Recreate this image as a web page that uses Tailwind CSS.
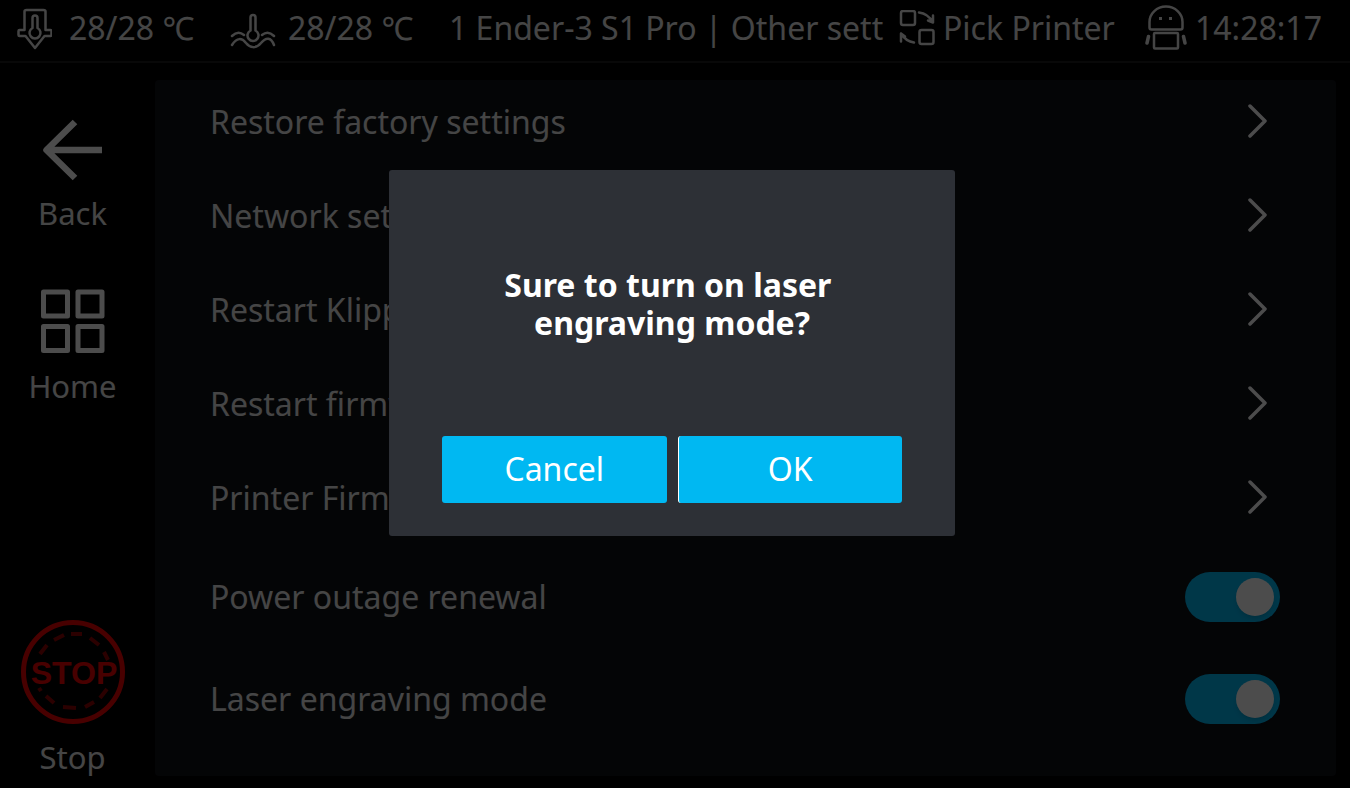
<!DOCTYPE html>
<html lang="en">
<head>
    <meta charset="UTF-8">
    <meta name="viewport" content="width=device-width, initial-scale=1.0">
    <title>Other settings</title>
    <script src="https://cdn.jsdelivr.net/npm/@tailwindcss/browser@4"></script>
</head>
<body class="min-h-screen flex flex-col bg-black text-[#e6e6e6] text-[32px] leading-[38px] font-['Noto_Sans',sans-serif]">
    <!-- Status bar -->
    <header class="h-[63px] pb-[5px] flex items-center border-b-2 border-[#1c1c1c] whitespace-nowrap">
        <div class="w-[214px] ml-4 flex shrink-0 items-center gap-[17px]">
            <svg class="w-9 h-11 shrink-0" viewBox="-1 -2 36 44" fill="none" stroke="currentColor" stroke-width="2.500" stroke-linejoin="round">
                <path d="M7.500 3.500Q7.500 2 9.500 2h17q2 0 2 1.500V22h5q1 0 1 1v4q0 1-1 1h-6L18 40 8.500 28h-6q-1 0-1-1v-4q0-1 1-1h5z"/>
                <path d="M15.500 20V10a2.500 2.500 0 0 1 5 0v10a5.500 5.500 0 1 1-5 0z"/>
            </svg>
            <span>28/28 ℃</span>
        </div>
        <div class="w-[219px] flex shrink-0 items-center gap-3">
            <svg class="w-[46px] h-11 shrink-0" viewBox="0 -2 46 44" fill="none" stroke="currentColor" stroke-width="2.500" stroke-linecap="round">
                <path d="M20.500 22.500V9.500a2.500 2.500 0 0 1 5 0v13a5.500 5.500 0 1 1-5 0z"/>
                <path d="M2 28q6-6 12-1M32 27q6-5 12 1"/>
                <path d="M2 37C7 29 12 30 16 35s10 6 15 0 10-6 13 2"/>
            </svg>
            <span>28/28 ℃</span>
        </div>
        <h1 class="flex-1">1 Ender-3 S1 Pro | Other sett</h1>
        <button class="w-[245px] flex shrink-0 items-center gap-2">
            <svg class="w-9 h-9 shrink-0" viewBox="0 1 36 36" fill="none" stroke="currentColor" stroke-width="2.500" stroke-linecap="round" stroke-linejoin="round">
                <rect x="2" y="2" width="14" height="14" rx="2"/>
                <rect x="20.500" y="21" width="14" height="14" rx="2"/>
                <path d="M20 3.500q9 1 14 10V6.500M34 13.500l-5-2M15 33.500q-8-1-13-9M2 32.500v-8l4 3"/>
            </svg>
            <span>Pick Printer</span>
        </button>
        <div class="w-[206px] flex shrink-0 items-center gap-2">
            <svg class="w-[43px] h-[46px] shrink-0" viewBox="0 1 43 46" fill="none" stroke="currentColor" stroke-width="2.500" stroke-linejoin="round">
                <path d="M7.500 25.500q-2 0-2-2V18a16.500 15.500 0 0 1 33 0v5.500q0 2-2 2z"/>
                <rect x="10" y="29" width="24" height="15.500" rx="1"/>
                <path d="M15 14.500h3M25 14.500h3" stroke-width="3"/>
                <path d="M4.500 32.500l-1.500 6.500M39.500 32.500l1.500 6.500" stroke-width="3.500" stroke-linecap="round"/>
            </svg>
            <time>14:28:17</time>
        </div>
    </header>

    <div class="flex-1 flex">
        <!-- Navigation -->
        <nav class="w-[155px] pr-[10px] pt-[53px] pb-3 shrink-0 flex flex-col items-center text-[31px]">
            <button class="flex flex-col items-center">
                <svg class="w-[68px] h-[68px]" viewBox="0 0 68 68" fill="none" stroke="#fff" stroke-width="6.500" stroke-linejoin="round">
                    <path d="M64 34H8M37 6L8.500 34 37 62"/>
                </svg>
                <span class="mt-[10px]">Back</span>
            </button>
            <button class="mt-[55px] flex flex-col items-center">
                <svg class="w-[68px] h-[68px]" viewBox="0 0 68 68" fill="none" stroke="#fff" stroke-width="5" stroke-linejoin="round">
                    <rect x="5.500" y="5" width="24" height="24"/>
                    <rect x="40" y="5" width="24" height="24"/>
                    <rect x="5.500" y="39.500" width="24" height="24"/>
                    <rect x="40" y="39.500" width="24" height="24"/>
                </svg>
                <span class="mt-3">Home</span>
            </button>
            <button class="mt-auto flex flex-col items-center">
                <svg class="w-[106px] h-[106px]" viewBox="0 0 106 106" fill="none" stroke="#f00000">
                    <circle cx="53" cy="53" r="49.500" stroke-width="5"/>
                    <path stroke="#900000" stroke-width="4" d="M20 35l7-9M34 21l10-5M51 15h11M70 19l9 7M84 33l4 8M19 69l2 3M26 77l8 7M43 88l13 1M65 88l9-5M80 79l7-9"/>
                    <text x="54" y="65" text-anchor="middle" fill="#f00000" stroke="none" font-family="Liberation Sans, sans-serif" font-weight="700" font-size="32">STOP</text>
                </svg>
                <span class="mt-[13px]">Stop</span>
            </button>
        </nav>

        <!-- Settings list -->
        <main class="flex-1 mt-[17px] mr-[14px] mb-3 pt-[10px] pl-[55px] pr-14 flex flex-col gap-[30px] rounded-sm bg-[#0f1117]">
            <button class="h-16 flex items-center justify-between">
                <span>Restore factory settings</span>
                <svg class="w-9 h-9 mr-1" viewBox="0 0 36 36" fill="none" stroke="#fff" stroke-width="3.500" stroke-linecap="round" stroke-linejoin="round"><path d="M10 2l15 15-15 15"/></svg>
            </button>
            <button class="h-16 flex items-center justify-between">
                <span>Network settings</span>
                <svg class="w-9 h-9 mr-1" viewBox="0 0 36 36" fill="none" stroke="#fff" stroke-width="3.500" stroke-linecap="round" stroke-linejoin="round"><path d="M10 2l15 15-15 15"/></svg>
            </button>
            <button class="h-16 flex items-center justify-between">
                <span>Restart Klipper</span>
                <svg class="w-9 h-9 mr-1" viewBox="0 0 36 36" fill="none" stroke="#fff" stroke-width="3.500" stroke-linecap="round" stroke-linejoin="round"><path d="M10 2l15 15-15 15"/></svg>
            </button>
            <button class="h-16 flex items-center justify-between">
                <span>Restart firmware</span>
                <svg class="w-9 h-9 mr-1" viewBox="0 0 36 36" fill="none" stroke="#fff" stroke-width="3.500" stroke-linecap="round" stroke-linejoin="round"><path d="M10 2l15 15-15 15"/></svg>
            </button>
            <button class="h-16 flex items-center justify-between">
                <span>Printer Firmware</span>
                <svg class="w-9 h-9 mr-1" viewBox="0 0 36 36" fill="none" stroke="#fff" stroke-width="3.500" stroke-linecap="round" stroke-linejoin="round"><path d="M10 2l15 15-15 15"/></svg>
            </button>
            <div class="h-[74px] flex items-center justify-between">
                <label for="powerOutage">Power outage renewal</label>
                <input id="powerOutage" type="checkbox" checked class="appearance-none w-[95px] h-[50px] px-[6px] flex items-center rounded-full bg-gray-600 checked:bg-[#00b8f2] checked:justify-end before:w-[38px] before:h-[38px] before:rounded-full before:bg-white before:shadow-md">
            </div>
            <div class="h-[70px] flex items-center justify-between">
                <label for="laserMode">Laser engraving mode</label>
                <input id="laserMode" type="checkbox" checked class="appearance-none w-[95px] h-[50px] px-[6px] flex items-center rounded-full bg-gray-600 checked:bg-[#00b8f2] checked:justify-end before:w-[38px] before:h-[38px] before:rounded-full before:bg-white before:shadow-md">
            </div>
        </main>
    </div>

    <!-- Confirmation dialog -->
    <div class="fixed inset-0 pt-[170px] pr-[6px] flex items-start justify-center bg-black/70">
        <div role="dialog" aria-modal="true" aria-labelledby="dialogText" class="w-[566px] px-[53px] pt-24 pb-[33px] rounded-[3px] bg-[#2d3036] text-white">
            <p id="dialogText" class="text-center font-bold">Sure to turn on laser&nbsp;<br>engraving mode?</p>
            <div class="mt-[94px] grid grid-cols-2 gap-[11px]">
                <button class="h-[67px] pb-[2px] rounded-[3px] bg-[#00b8f2]">Cancel</button>
                <button class="h-[67px] pb-[2px] rounded-[3px] border-l border-white bg-[#00b8f2]">OK</button>
            </div>
        </div>
    </div>
</body>
</html>
